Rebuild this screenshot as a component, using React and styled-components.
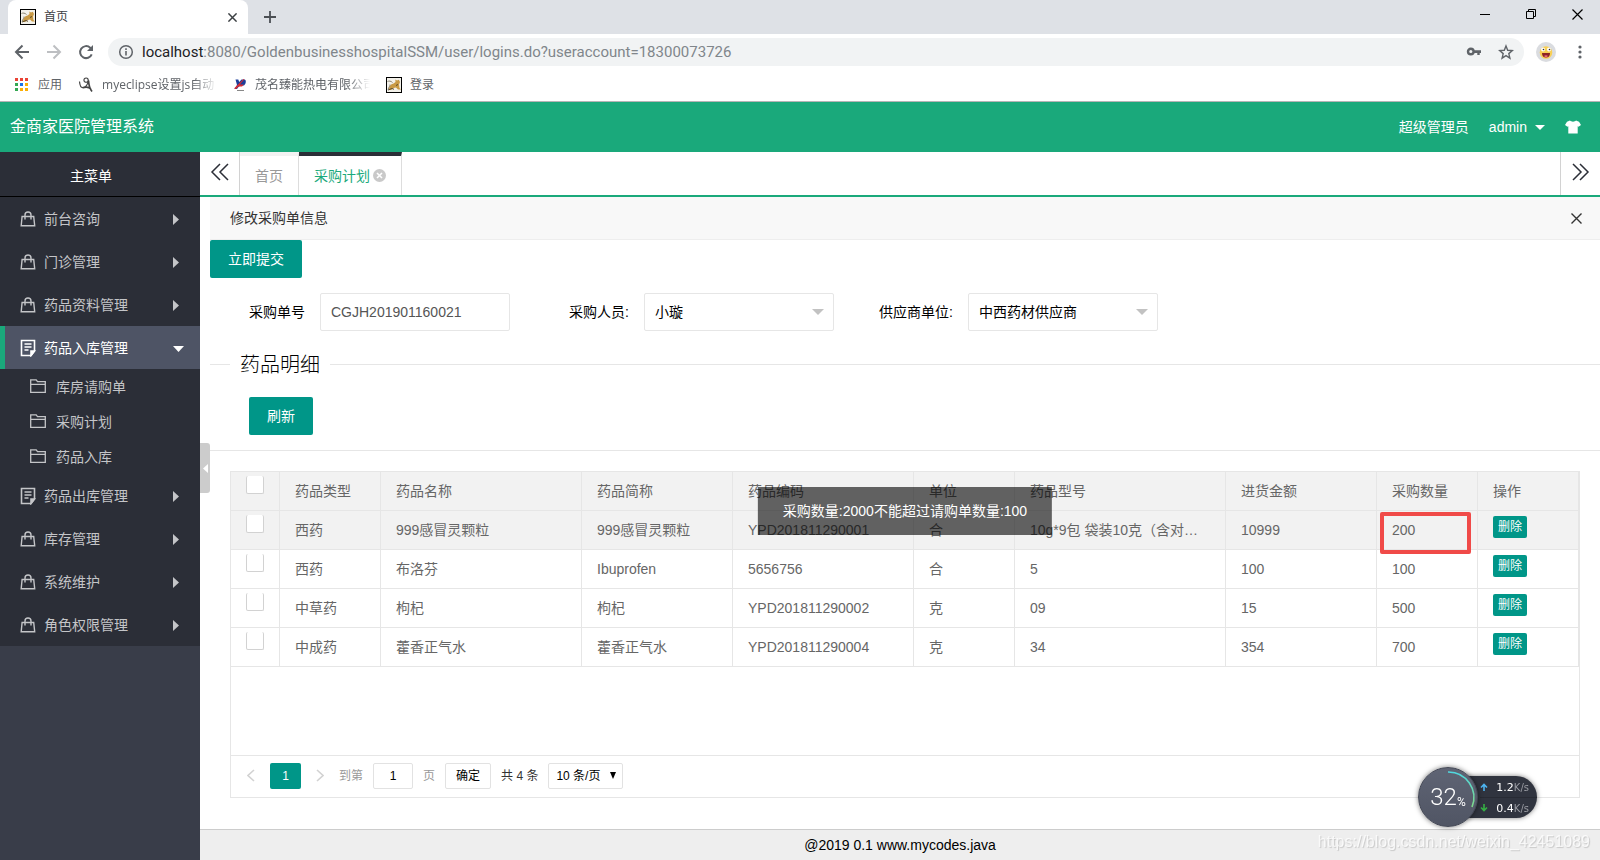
import React from 'react';
import styled, { createGlobalStyle, css } from 'styled-components';

const GlobalStyle = createGlobalStyle`
  *, *::before, *::after { box-sizing: border-box; }
  body {
    margin: 0;
    background: #fff;
    color: #333;
    font: 14px/24px "Liberation Sans", "Noto Sans CJK SC", sans-serif;
  }
  button, input, select { font: inherit; color: inherit; margin: 0; }
  button { border: 0; padding: 0; background: none; cursor: pointer; }
  a { color: inherit; text-decoration: none; }
  svg { display: block; flex: none; }
`;

const Page = styled.div`
  display: flex;
  flex-direction: column;
  min-height: 100vh;
`;

/* ---------- browser frame ---------- */

const Browser = styled.header`
  background: #fff;
  border-bottom: 1px solid #b6b4b6;
  font-family: "Open Sans", "Noto Sans CJK SC", sans-serif;
  color: #5f6368;
`;

const TabStrip = styled.div`
  display: flex;
  align-items: center;
  height: 34px;
  padding: 0 15px 0 8px;
  background: #dee1e6;
`;

const BrowserTab = styled.div`
  display: flex;
  align-items: center;
  gap: 8px;
  width: 240px;
  height: 34px;
  padding: 0 10px 0 12px;
  border-radius: 8px 8px 0 0;
  background: #fff;
  color: #3c4043;
  font-size: 12px;
`;

const TabTitle = styled.span`
  flex: 1;
`;

const IconButton = styled.button`
  display: flex;
  align-items: center;
  justify-content: center;
  width: ${(p) => p.$w || 16}px;
  height: ${(p) => p.$h || 16}px;
`;

const NewTab = styled(IconButton)`
  margin-left: 14px;
`;

const WindowControls = styled.div`
  display: flex;
  gap: 30px;
  margin-left: auto;
  padding-bottom: 6px;
`;

const Toolbar = styled.div`
  display: flex;
  align-items: center;
  gap: 16px;
  height: 36px;
  padding: 0 12px 0 14px;
`;

const AddressBar = styled.div`
  display: flex;
  align-items: center;
  flex: 1;
  gap: 8px;
  height: 28px;
  margin: 0 -4px 0 -2px;
  padding: 0 10px;
  border-radius: 14px;
  background: #f1f3f4;
`;

const Url = styled.span`
  flex: 1;
  font-family: Roboto, sans-serif;
  font-size: 15px;
  color: #80868b;
  b { font-weight: 400; color: #202124; }
`;

const AddressIcons = styled.span`
  display: flex;
  gap: 16px;
`;

const Bookmarks = styled.nav`
  display: flex;
  align-items: center;
  height: 31px;
  padding: 0 14px 2px;
  font-size: 12px;
`;

const Bookmark = styled.a`
  display: flex;
  align-items: center;
  gap: 8px;
  margin-right: 16px;
`;

const BookmarkText = styled.span`
  white-space: nowrap;
  ${(p) => p.$fade && css`
    width: 115px;
    mask-image: linear-gradient(to right, #000 80%, transparent 100%);
  `}
`;

/* ---------- application frame ---------- */

const AppHeader = styled.div`
  display: flex;
  align-items: center;
  height: 50px;
  padding: 0 19px 0 10px;
  background: #1aa97b;
  color: #fff;
`;

const Brand = styled.h1`
  flex: 1;
  margin: 0;
  font-size: 16px;
  font-weight: 400;
`;

const UserArea = styled.div`
  display: flex;
  align-items: center;
  gap: 20px;
`;

const UserMenu = styled.button`
  display: flex;
  align-items: center;
  gap: 8px;
`;

const Body = styled.div`
  display: flex;
  flex: 1;
`;

const Sidebar = styled.aside`
  flex: none;
  width: 200px;
  background: #393d49;
  color: #c4c5c8;
`;

const SidebarTitle = styled.div`
  height: 45px;
  padding-right: 18px;
  border-bottom: 1px solid #000;
  background: #2b2e37;
  color: #fff;
  line-height: 48px;
  text-align: center;
`;

const Menu = styled.nav`
  display: flex;
  flex-direction: column;
  background: #2b2e37;
`;

const MenuItem = styled.button`
  display: flex;
  align-items: center;
  gap: 8px;
  height: 43px;
  padding: 0 16px 0 15px;
  border-left: 5px solid ${(p) => (p.$active ? '#1aa97b' : 'transparent')};
  background: ${(p) => (p.$active ? '#4e5465' : 'transparent')};
  color: ${(p) => (p.$active ? '#fff' : 'inherit')};
  text-align: left;
`;

const MenuLabel = styled.span`
  flex: 1;
`;

const MenuCaret = styled.span`
  width: 11px;
  padding-top: 2px;
`;

const SubItem = styled.a`
  display: flex;
  align-items: center;
  gap: 10px;
  height: 35px;
  padding-left: 30px;
`;

const Main = styled.main`
  display: flex;
  flex: 1;
  flex-direction: column;
  min-width: 0;
`;

const PageTabs = styled.div`
  display: flex;
  height: 45px;
  border-bottom: 2px solid #1aa97b;
`;

const TabArrow = styled.button`
  display: flex;
  align-items: center;
  justify-content: center;
  width: 40px;
  padding-bottom: 4px;
  color: #2b2e37;
  border: 0 solid #d2d2d2;
  border-right-width: ${(p) => (p.$right ? 0 : 1)}px;
  border-left-width: ${(p) => (p.$right ? 1 : 0)}px;
  margin-left: ${(p) => (p.$right ? 'auto' : 0)};
`;

const PageTab = styled.button`
  display: flex;
  align-items: center;
  gap: 3px;
  padding: 0 15px;
  border-top: 4px solid ${(p) => (p.$active ? '#2b2e37' : '#f2f2f2')};
  border-right: 1px solid #ddd;
  color: ${(p) => (p.$active ? '#1aa97b' : '#999')};
`;

const Frame = styled.div`
  display: flex;
  flex: 1;
`;

const Gutter = styled.div`
  display: flex;
  flex: none;
  align-items: flex-start;
  width: 10px;
  padding-top: 246px;
`;

const Collapse = styled.button`
  display: flex;
  align-items: center;
  justify-content: center;
  width: 10px;
  height: 50px;
  border-radius: 0 3px 3px 0;
  background: #ccc;
`;

const Content = styled.section`
  position: relative;
  flex: 1;
  min-width: 0;
`;

const PanelTitle = styled.div`
  display: flex;
  align-items: center;
  justify-content: space-between;
  height: 43px;
  padding: 0 18px 0 20px;
  border-bottom: 1px solid #eee;
  background: #f8f8f8;
`;

const PrimaryButton = styled.button`
  height: 38px;
  padding: 0 18px;
  border-radius: 2px;
  background: #009688;
  color: #fff;
  line-height: 38px;
`;

const FormRow = styled.div`
  display: flex;
  gap: 24px;
  padding: 15px 0;
  color: #000;
`;

const Field = styled.div`
  display: flex;
  align-items: center;
`;

const FieldLabel = styled.label`
  width: 110px;
  padding-right: 15px;
  text-align: right;
`;

const TextInput = styled.input`
  width: 190px;
  height: 38px;
  padding: 0 10px;
  border: 1px solid #e6e6e6;
  border-radius: 2px;
  background: #fff;
  color: #555;
  outline: 0;
`;

const SelectWrap = styled.span`
  position: relative;
  display: block;
  svg {
    position: absolute;
    right: 10px;
    top: 16px;
    pointer-events: none;
  }
`;

const Select = styled.select`
  width: 190px;
  height: 38px;
  padding: 0 10px;
  border: 1px solid #e6e6e6;
  border-radius: 2px;
  background: #fff;
  color: #000;
  appearance: none;
  outline: 0;
`;

const Divided = styled.fieldset`
  min-width: 0;
  margin: 0;
  padding: 0;
  border: 0;
  border-top: 1px solid #e6e6e6;
`;

const Legend = styled.legend`
  margin-left: 20px;
  padding: 2px 10px 0;
  color: #000;
  font-size: 20px;
  font-weight: 300;
  line-height: 34px;
`;

const Actions = styled.div`
  padding: 15px 39px;
  border-bottom: 1px solid #e6e6e6;
`;

const TableBox = styled.div`
  margin: 20px 20px 31px;
  border: 1px solid #e6e6e6;
`;

const TableArea = styled.div`
  min-height: 283px;
`;

const Table = styled.table`
  width: 100%;
  border-collapse: separate;
  border-spacing: 0;
  table-layout: fixed;
  color: #666;
  th, td {
    position: relative;
    height: 39px;
    padding: 0 15px;
    border-right: 1px solid #e6e6e6;
    border-bottom: 1px solid #e6e6e6;
    font-weight: 400;
    text-align: left;
    white-space: nowrap;
  }
`;

const Row = styled.tr`
  background: ${(p) => (p.$shaded ? '#f2f2f2' : '#fff')};
`;

const Checkbox = styled.input`
  display: block;
  width: 18px;
  height: 18px;
  margin: 0 0 12px;
  border: 1px solid #d2d2d2;
  border-top: 0;
  border-radius: 2px;
  background: #fff;
  appearance: none;
`;

const SmallButton = styled.button`
  display: block;
  height: 22px;
  margin-bottom: 6px;
  padding: 0 5px;
  border-radius: 2px;
  background: #009688;
  color: #fff;
  font-size: 12px;
  line-height: 22px;
`;

const Highlight = styled.span`
  position: absolute;
  z-index: 1;
  inset: 1px 6px -5px 3px;
  border: 4px solid #f04a48;
  border-radius: 2px;
`;

const Pager = styled.div`
  display: flex;
  align-items: center;
  gap: 10px;
  height: 42px;
  padding: 0 11px 2px;
  border-top: 1px solid #e6e6e6;
  font-size: 12px;
`;

const PageStep = styled.button`
  display: flex;
  align-items: center;
  justify-content: center;
  width: 18px;
  height: 26px;
`;

const CurrentPage = styled.button`
  width: 31px;
  height: 26px;
  border-radius: 2px;
  background: #009688;
  color: #fff;
`;

const Jump = styled.label`
  display: flex;
  align-items: center;
  gap: 10px;
  color: #999;
`;

const JumpInput = styled.input`
  width: 40px;
  height: 26px;
  border: 1px solid #e2e2e2;
  border-radius: 2px;
  color: #000;
  text-align: center;
  outline: 0;
`;

const PlainButton = styled.button`
  height: 26px;
  padding: 0 10px;
  border: 1px solid #e2e2e2;
  border-radius: 2px;
  color: #000;
  line-height: 24px;
`;

const PageSize = styled(Select)`
  width: 75px;
  height: 26px;
  padding: 0 7px;
  border-color: #e2e2e2;
`;

const PageSizeWrap = styled(SelectWrap)`
  svg { right: 7px; top: 9px; }
`;

const Toast = styled.div`
  position: absolute;
  z-index: 2;
  top: 290px;
  left: 50%;
  padding: 12px 25px;
  background: rgba(0, 0, 0, 0.6);
  color: #fff;
  white-space: nowrap;
  transform: translateX(-50%);
`;

const Footer = styled.footer`
  height: 31px;
  border-top: 1px solid #ccc;
  background: #eee;
  color: #000;
  line-height: 31px;
  text-align: center;
`;

/* ---------- floating overlays ---------- */

const Monitor = styled.div`
  position: fixed;
  z-index: 3;
  right: 63px;
  bottom: 33px;
  display: flex;
  align-items: center;
`;

const Gauge = styled.div`
  position: relative;
  z-index: 1;
  display: flex;
  align-items: center;
  justify-content: center;
  width: 60px;
  height: 60px;
  border: 1px solid #444855;
  border-radius: 50%;
  background: linear-gradient(#5f6474, #505564);
  box-shadow: 0 0 5px rgba(0, 0, 0, 0.5);
  color: #fff;
  font: 300 24px/28px Roboto, sans-serif;
  svg { position: absolute; inset: -1px; }
  small { font-size: 12px; font-weight: 400; padding-top: 10px; }
`;

const Speeds = styled.div`
  width: 74px;
  height: 42px;
  margin-left: -15px;
  padding-left: 17px;
  border-radius: 0 21px 21px 0;
  background: #30343f;
  box-shadow: 0 0 5px rgba(0, 0, 0, 0.5);
  color: #fff;
  font: 11px/21px "DejaVu Sans", sans-serif;
`;

const Speed = styled.div`
  display: flex;
  align-items: center;
  justify-content: space-between;
  height: 21px;
  padding-right: 8px;
  padding-top: 1px;
  & + & { border-top: 1px solid #282b34; padding-top: 0; }
  small { color: #9a9ca3; font-size: 10px; }
`;

const Watermark = styled.div`
  position: fixed;
  z-index: 2;
  right: 10px;
  bottom: 6px;
  color: rgba(255, 255, 255, 0.75);
  font-size: 16px;
  text-shadow: 1px 1px 1px rgba(0, 0, 0, 0.16);
`;

/* ---------- drawings ---------- */

const CatIcon = () => (
  <svg width="16" height="16" viewBox="0 0 16 16">
    <rect x=".5" y=".5" width="15" height="15" fill="#f3f1ea" stroke="#000" />
    <path d="M3 12.500c0-3 1.500-5.500 4.500-6L9.500 5 9.300 2.500l1.700 1 1.800-.8L14 5l-1 2.500.5 3.500 1.500 1.500h-3l-2-2-2.500.5L5 13z" fill="#c99a45" />
    <path d="M1.500 4.500c1.500-.8 3.500-.5 5 1M2 12.500c1-3 2-3 2-5" stroke="#8d8672" fill="none" />
    <path d="M2 13l4-1.500 2 .8M12 7.500l-2 1" stroke="#5b4a2c" fill="none" />
  </svg>
);

const Cross = ({ size = 11, w = 1, color = 'currentColor' }) => (
  <svg width={size} height={size} viewBox="0 0 11 11">
    <path d="M.5.5l10 10M10.500.5l-10 10" stroke={color} strokeWidth={w} fill="none" />
  </svg>
);

const Arrow = ({ flip, color }) => (
  <svg width="16" height="16" viewBox="0 0 16 16" transform={flip ? 'rotate(180)' : undefined}>
    <path d="M15 8H2M8.500 1.500L2 8l6.500 6.500" stroke={color} strokeWidth="2" fill="none" />
  </svg>
);

const Reload = () => (
  <svg width="16" height="16" viewBox="0 0 16 16">
    <path d="M13.700 10.300A6 6 0 1 1 12.200 3.700L14 5.500" stroke="#5f6368" strokeWidth="2" fill="none" />
    <path d="M15 1v6H9z" fill="#5f6368" />
  </svg>
);

const Info = () => (
  <svg width="16" height="16" viewBox="0 0 16 16" fill="none" stroke="#5f6368">
    <circle cx="8" cy="8" r="6.300" strokeWidth="1.500" />
    <path d="M8 7v4.500M8 4.300v1.600" strokeWidth="1.600" />
  </svg>
);

const Key = () => (
  <svg width="16" height="16" viewBox="0 0 16 16">
    <circle cx="4.800" cy="7.500" r="2.800" fill="none" stroke="#5f6368" strokeWidth="2.400" />
    <path d="M7.500 6.200H15v2.700h-1.300V11h-2.400V8.900H7.500z" fill="#5f6368" />
  </svg>
);

const Star = () => (
  <svg width="16" height="16" viewBox="0 0 16 16">
    <path d="M8 2l1.700 4.300 4.600.3-3.500 3 1.100 4.500L8 11.600l-3.900 2.500 1.100-4.500-3.500-3 4.600-.3z" fill="none" stroke="#5f6368" strokeWidth="1.400" />
  </svg>
);

const Avatar = () => (
  <svg width="20" height="20" viewBox="0 0 20 20">
    <circle cx="10" cy="10" r="10" fill="#dadce0" />
    <circle cx="10" cy="10.500" r="6.300" fill="#f8cf55" />
    <circle cx="7" cy="7.500" r="2" fill="#fff" />
    <circle cx="13" cy="7.500" r="2" fill="#fff" />
    <circle cx="7.500" cy="7.500" r=".8" fill="#333" />
    <circle cx="13.500" cy="7.500" r=".8" fill="#333" />
    <path d="M6 11h8c0 3-1.500 4.500-4 4.500s-4-1.500-4-4.500z" fill="#8c2424" />
    <path d="M8 14c1-1 3-1 4 0-1 1.500-3 1.500-4 0z" fill="#f06a80" />
  </svg>
);

const Dots = () => (
  <svg width="4" height="16" viewBox="0 0 4 16" fill="#5f6368">
    <circle cx="2" cy="3" r="1.600" />
    <circle cx="2" cy="8" r="1.600" />
    <circle cx="2" cy="13" r="1.600" />
  </svg>
);

const GRID = ['#ea4335', '#ea4335', '#ea4335', '#34a853', '#1a73e8', '#fbae05', '#34a853', '#fbae05', '#fbae05'];

const AppsIcon = () => (
  <svg width="16" height="16" viewBox="0 0 16 16">
    {GRID.map((fill, i) => (
      <rect key={i} x={1 + (i % 3) * 5} y={1 + Math.floor(i / 3) * 5} width="3" height="3" fill={fill} />
    ))}
  </svg>
);

const SwirlIcon = () => (
  <svg width="16" height="16" viewBox="0 0 16 16" fill="none" stroke="#444">
    <path d="M1.500 4.500c.3 3.500 1.500 6.200 3.200 6.200 2.600 0 5.600-3.500 5.600-6.900 0-1.700-.9-2.800-2.200-2.800S5.800 2 6 3.600s2.200 2.300 4 .9" strokeWidth="1.200" />
    <path d="M10.500 3.500c.3 4.500 1.500 8.500 3.500 11M4.700 10.700c3-.8 6-1 8.300 1.300" strokeWidth="1.700" />
  </svg>
);

const PlantIcon = () => (
  <svg width="14" height="14" viewBox="0 0 14 14">
    <path d="M2.500 1.500h2.800l.9 2.600L8.500 1.500h3.300c1.700.8 1.200 4.500-.8 6H7.500L5.500 9 4 11H1.500l2.500-4z" fill="#1d3f9a" />
    <path d="M1 10.500L10.500 1h1L6.800 6.500h4L9 8.500H5.500L3 11z" fill="#d92c32" />
    <path d="M4 12.500h7" stroke="#888" />
  </svg>
);

const Minimize = () => (
  <svg width="16" height="16" viewBox="0 0 16 16"><path d="M3 8.500h10" stroke="#000" /></svg>
);

const Restore = () => (
  <svg width="16" height="16" viewBox="0 0 16 16" fill="none" stroke="#000">
    <path d="M3.500 5.500h7v7h-7zM5.500 5.500v-2h7v7h-2" />
  </svg>
);

const Triangle = ({ dir = 'down', w = 10, h = 5, color = 'currentColor' }) => {
  const points = {
    down: `0,0 ${w},0 ${w / 2},${h}`,
    right: `0,0 ${w},${h / 2} 0,${h}`,
    left: `${w},0 0,${h / 2} ${w},${h}`,
  };
  return (
    <svg width={w} height={h} viewBox={`0 0 ${w} ${h}`}>
      <polygon points={points[dir]} fill={color} />
    </svg>
  );
};

const Shirt = () => (
  <svg width="16" height="14" viewBox="0 0 16 14">
    <path d="M5 .5c1 1.500 5 1.500 6 0l3 1.200L16 5l-2.500 1.800-.8-.6V13.500H3.300V6.200l-.8.6L0 5l2-3.300z" fill="#fff" />
  </svg>
);

const Bag = () => (
  <svg width="16" height="16" viewBox="0 0 16 16" fill="none" stroke="currentColor" strokeWidth="1.400">
    <path d="M2.100 5.500h11.600l1 9.300H1.200zM5 8.500V4a3 3 0 0 1 6 0v4.500" />
  </svg>
);

const Note = () => (
  <svg width="16" height="18" viewBox="0 0 16 18" fill="none" stroke="currentColor" strokeWidth="1.600">
    <path d="M1.500 1.500h13V12L11 16.500H1.500z" />
    <path d="M14.500 12H11v4.500z" fill="currentColor" />
    <path d="M4.500 5h7M4.500 8h7M4.500 11h4" strokeWidth="1.400" />
  </svg>
);

const Folder = () => (
  <svg width="16" height="16" viewBox="0 0 16 16" fill="none" stroke="currentColor" strokeWidth="1.300">
    <path d="M.7 13.300V.9h5.500l1.300 1.700h7.800v10.700zM.7 5.400h14.600" />
  </svg>
);

const Chevrons = ({ right }) => (
  <svg width="20" height="18" viewBox="0 0 20 18" fill="none" stroke="currentColor" strokeWidth="1.500">
    {right
      ? <path d="M2 1l8 8-8 8M9 1l8 8-8 8" />
      : <path d="M10 1L2 9l8 8M18 1l-8 8 8 8" />}
  </svg>
);

const Chevron = ({ right }) => (
  <svg width="8" height="13" viewBox="0 0 8 13" fill="none" stroke="#d2d2d2" strokeWidth="1.600">
    <path d={right ? 'M1 1l6 5.500L1 12' : 'M7 1L1 6.500 7 12'} />
  </svg>
);

const CloseDot = () => (
  <svg width="13" height="13" viewBox="0 0 13 13">
    <circle cx="6.500" cy="6.500" r="6.500" fill="#c9c9c9" />
    <path d="M4 4l5 5M9 4l-5 5" stroke="#fff" strokeWidth="1.600" />
  </svg>
);

const SpeedArrow = ({ down, color }) => (
  <svg width="8" height="8" viewBox="0 0 8 8" fill="none" stroke={color} strokeWidth="1.600">
    <path d={down ? 'M4 0v6M1 3.500l3 3 3-3' : 'M4 8V2M1 4.500l3-3 3 3'} />
  </svg>
);

/* ---------- data ---------- */

const MENU = [
  { label: '前台咨询', Icon: Bag },
  { label: '门诊管理', Icon: Bag },
  { label: '药品资料管理', Icon: Bag },
  { label: '药品入库管理', Icon: Note, items: ['库房请购单', '采购计划', '药品入库'] },
  { label: '药品出库管理', Icon: Note },
  { label: '库存管理', Icon: Bag },
  { label: '系统维护', Icon: Bag },
  { label: '角色权限管理', Icon: Bag },
];

const COLUMNS = [
  ['药品类型', 101],
  ['药品名称', 201],
  ['药品简称', 151],
  ['药品编码', 181],
  ['单位', 101],
  ['药品型号', 211],
  ['进货金额', 151],
  ['采购数量', 101],
  ['操作', 101],
];

const ROWS = [
  ['西药', '999感冒灵颗粒', '999感冒灵颗粒', 'YPD201811290001', '合', '10g*9包 袋装10克（含对…', '10999', '200'],
  ['西药', '布洛芬', 'Ibuprofen', '5656756', '合', '5', '100', '100'],
  ['中草药', '枸杞', '枸杞', 'YPD201811290002', '克', '09', '15', '500'],
  ['中成药', '藿香正气水', '藿香正气水', 'YPD201811290004', '克', '34', '354', '700'],
];

function BrowserFrame() {
  return (
    <Browser>
      <TabStrip>
        <BrowserTab>
          <CatIcon />
          <TabTitle>首页</TabTitle>
          <IconButton $w={12} aria-label="关闭标签页"><Cross size={9} w={1.8} /></IconButton>
        </BrowserTab>
        <NewTab aria-label="打开新标签页">
          <svg width="12" height="12" viewBox="0 0 12 12"><path d="M6 0v12M0 6h12" stroke="#4b4f54" strokeWidth="1.800" /></svg>
        </NewTab>
        <WindowControls>
          <IconButton aria-label="最小化"><Minimize /></IconButton>
          <IconButton aria-label="还原"><Restore /></IconButton>
          <IconButton aria-label="关闭"><Cross color="#000" w={1.2} /></IconButton>
        </WindowControls>
      </TabStrip>
      <Toolbar>
        <IconButton aria-label="后退"><Arrow color="#5f6368" /></IconButton>
        <IconButton aria-label="前进"><Arrow flip color="#bdbfc2" /></IconButton>
        <IconButton aria-label="重新加载"><Reload /></IconButton>
        <AddressBar>
          <Info />
          <Url><b>localhost</b>:8080/GoldenbusinesshospitalSSM/user/logins.do?useraccount=18300073726</Url>
          <AddressIcons><Key /><Star /></AddressIcons>
        </AddressBar>
        <IconButton $w={20} $h={20} aria-label="用户"><Avatar /></IconButton>
        <IconButton aria-label="菜单"><Dots /></IconButton>
      </Toolbar>
      <Bookmarks>
        <Bookmark href="#"><AppsIcon /><BookmarkText>应用</BookmarkText></Bookmark>
        <Bookmark href="#"><SwirlIcon /><BookmarkText $fade>myeclipse设置js自动</BookmarkText></Bookmark>
        <Bookmark href="#"><PlantIcon /><BookmarkText $fade>茂名臻能热电有限公司</BookmarkText></Bookmark>
        <Bookmark href="#"><CatIcon /><BookmarkText>登录</BookmarkText></Bookmark>
      </Bookmarks>
    </Browser>
  );
}

function SideMenu() {
  return (
    <Sidebar>
      <SidebarTitle>主菜单</SidebarTitle>
      <Menu>
        {MENU.map(({ label, Icon, items }) => (
          <React.Fragment key={label}>
            <MenuItem $active={!!items}>
              <Icon />
              <MenuLabel>{label}</MenuLabel>
              <MenuCaret>
                {items ? <Triangle w={11} h={6} /> : <Triangle dir="right" w={6} h={11} />}
              </MenuCaret>
            </MenuItem>
            {items && items.map((item) => (
              <SubItem href="#" key={item}><Folder />{item}</SubItem>
            ))}
          </React.Fragment>
        ))}
      </Menu>
    </Sidebar>
  );
}

function DrugTable() {
  return (
    <Table>
      <colgroup>
        <col style={{ width: 49 }} />
        {COLUMNS.map(([name, width]) => <col key={name} style={{ width }} />)}
      </colgroup>
      <thead>
        <Row $shaded>
          <th><Checkbox type="checkbox" aria-label="全选" /></th>
          {COLUMNS.map(([name]) => <th key={name}>{name}</th>)}
        </Row>
      </thead>
      <tbody>
        {ROWS.map((row, r) => (
          <Row key={row[3]} $shaded={r === 0}>
            <td><Checkbox type="checkbox" aria-label={`选择${row[1]}`} /></td>
            {row.map((value, c) => (
              <td key={c}>
                {value}
                {r === 0 && c === 7 && <Highlight />}
              </td>
            ))}
            <td><SmallButton>删除</SmallButton></td>
          </Row>
        ))}
      </tbody>
    </Table>
  );
}

function PagerBar() {
  return (
    <Pager>
      <PageStep aria-label="上一页"><Chevron /></PageStep>
      <CurrentPage>1</CurrentPage>
      <PageStep aria-label="下一页"><Chevron right /></PageStep>
      <Jump>到第<JumpInput defaultValue="1" />页</Jump>
      <PlainButton>确定</PlainButton>
      <span>共 4 条</span>
      <PageSizeWrap>
        <PageSize aria-label="每页条数" defaultValue="10">
          <option value="10">10 条/页</option>
        </PageSize>
        <Triangle w={6} h={7} color="#000" />
      </PageSizeWrap>
    </Pager>
  );
}

export default function App() {
  return (
    <Page>
      <GlobalStyle />
      <BrowserFrame />
      <AppHeader>
        <Brand>金商家医院管理系统</Brand>
        <UserArea>
          <span>超级管理员</span>
          <UserMenu>admin<Triangle w={10} h={5} /></UserMenu>
          <IconButton aria-label="换肤"><Shirt /></IconButton>
        </UserArea>
      </AppHeader>
      <Body>
        <SideMenu />
        <Main>
          <PageTabs>
            <TabArrow aria-label="向左滚动"><Chevrons /></TabArrow>
            <PageTab>首页</PageTab>
            <PageTab $active>采购计划<CloseDot /></PageTab>
            <TabArrow $right aria-label="向右滚动"><Chevrons right /></TabArrow>
          </PageTabs>
          <Frame>
            <Gutter>
              <Collapse aria-label="收起菜单"><Triangle dir="left" w={5} h={9} color="#fff" /></Collapse>
            </Gutter>
            <Content>
              <PanelTitle>
                修改采购单信息
                <IconButton $w={12} aria-label="关闭面板"><Cross w={1.4} /></IconButton>
              </PanelTitle>
              <PrimaryButton>立即提交</PrimaryButton>
              <FormRow>
                <Field>
                  <FieldLabel htmlFor="order-no">采购单号</FieldLabel>
                  <TextInput id="order-no" defaultValue="CGJH201901160021" />
                </Field>
                <Field>
                  <FieldLabel htmlFor="buyer">采购人员:</FieldLabel>
                  <SelectWrap>
                    <Select id="buyer"><option>小璇</option></Select>
                    <Triangle w={12} h={6} color="#c2c2c2" />
                  </SelectWrap>
                </Field>
                <Field>
                  <FieldLabel htmlFor="supplier">供应商单位:</FieldLabel>
                  <SelectWrap>
                    <Select id="supplier"><option>中西药材供应商</option></Select>
                    <Triangle w={12} h={6} color="#c2c2c2" />
                  </SelectWrap>
                </Field>
              </FormRow>
              <Divided>
                <Legend>药品明细</Legend>
                <Actions><PrimaryButton>刷新</PrimaryButton></Actions>
                <TableBox>
                  <TableArea><DrugTable /></TableArea>
                  <PagerBar />
                </TableBox>
              </Divided>
              <Toast role="status">采购数量:2000不能超过请购单数量:100</Toast>
            </Content>
          </Frame>
          <Footer>@2019 0.1 www.mycodes.java</Footer>
        </Main>
      </Body>
      <Monitor>
        <Gauge>
          <svg width="60" height="60" viewBox="0 0 60 60">
            <defs>
              <linearGradient id="arc" x1="0" y1="0" x2="0" y2="1">
                <stop offset="0" stopColor="#4fd8e0" />
                <stop offset="1" stopColor="#7fd88a" />
              </linearGradient>
            </defs>
            <path d="M30 5a25.500 25.500 0 0 1 24 35" fill="none" stroke="url(#arc)" strokeWidth="1.600" />
          </svg>
          32<small>%</small>
        </Gauge>
        <Speeds>
          <Speed><SpeedArrow color="#4db4f0" /><span>1.2<small>K/s</small></span></Speed>
          <Speed><SpeedArrow down color="#35b044" /><span>0.4<small>K/s</small></span></Speed>
        </Speeds>
      </Monitor>
      <Watermark>https://blog.csdn.net/weixin_42451089</Watermark>
    </Page>
  );
}
